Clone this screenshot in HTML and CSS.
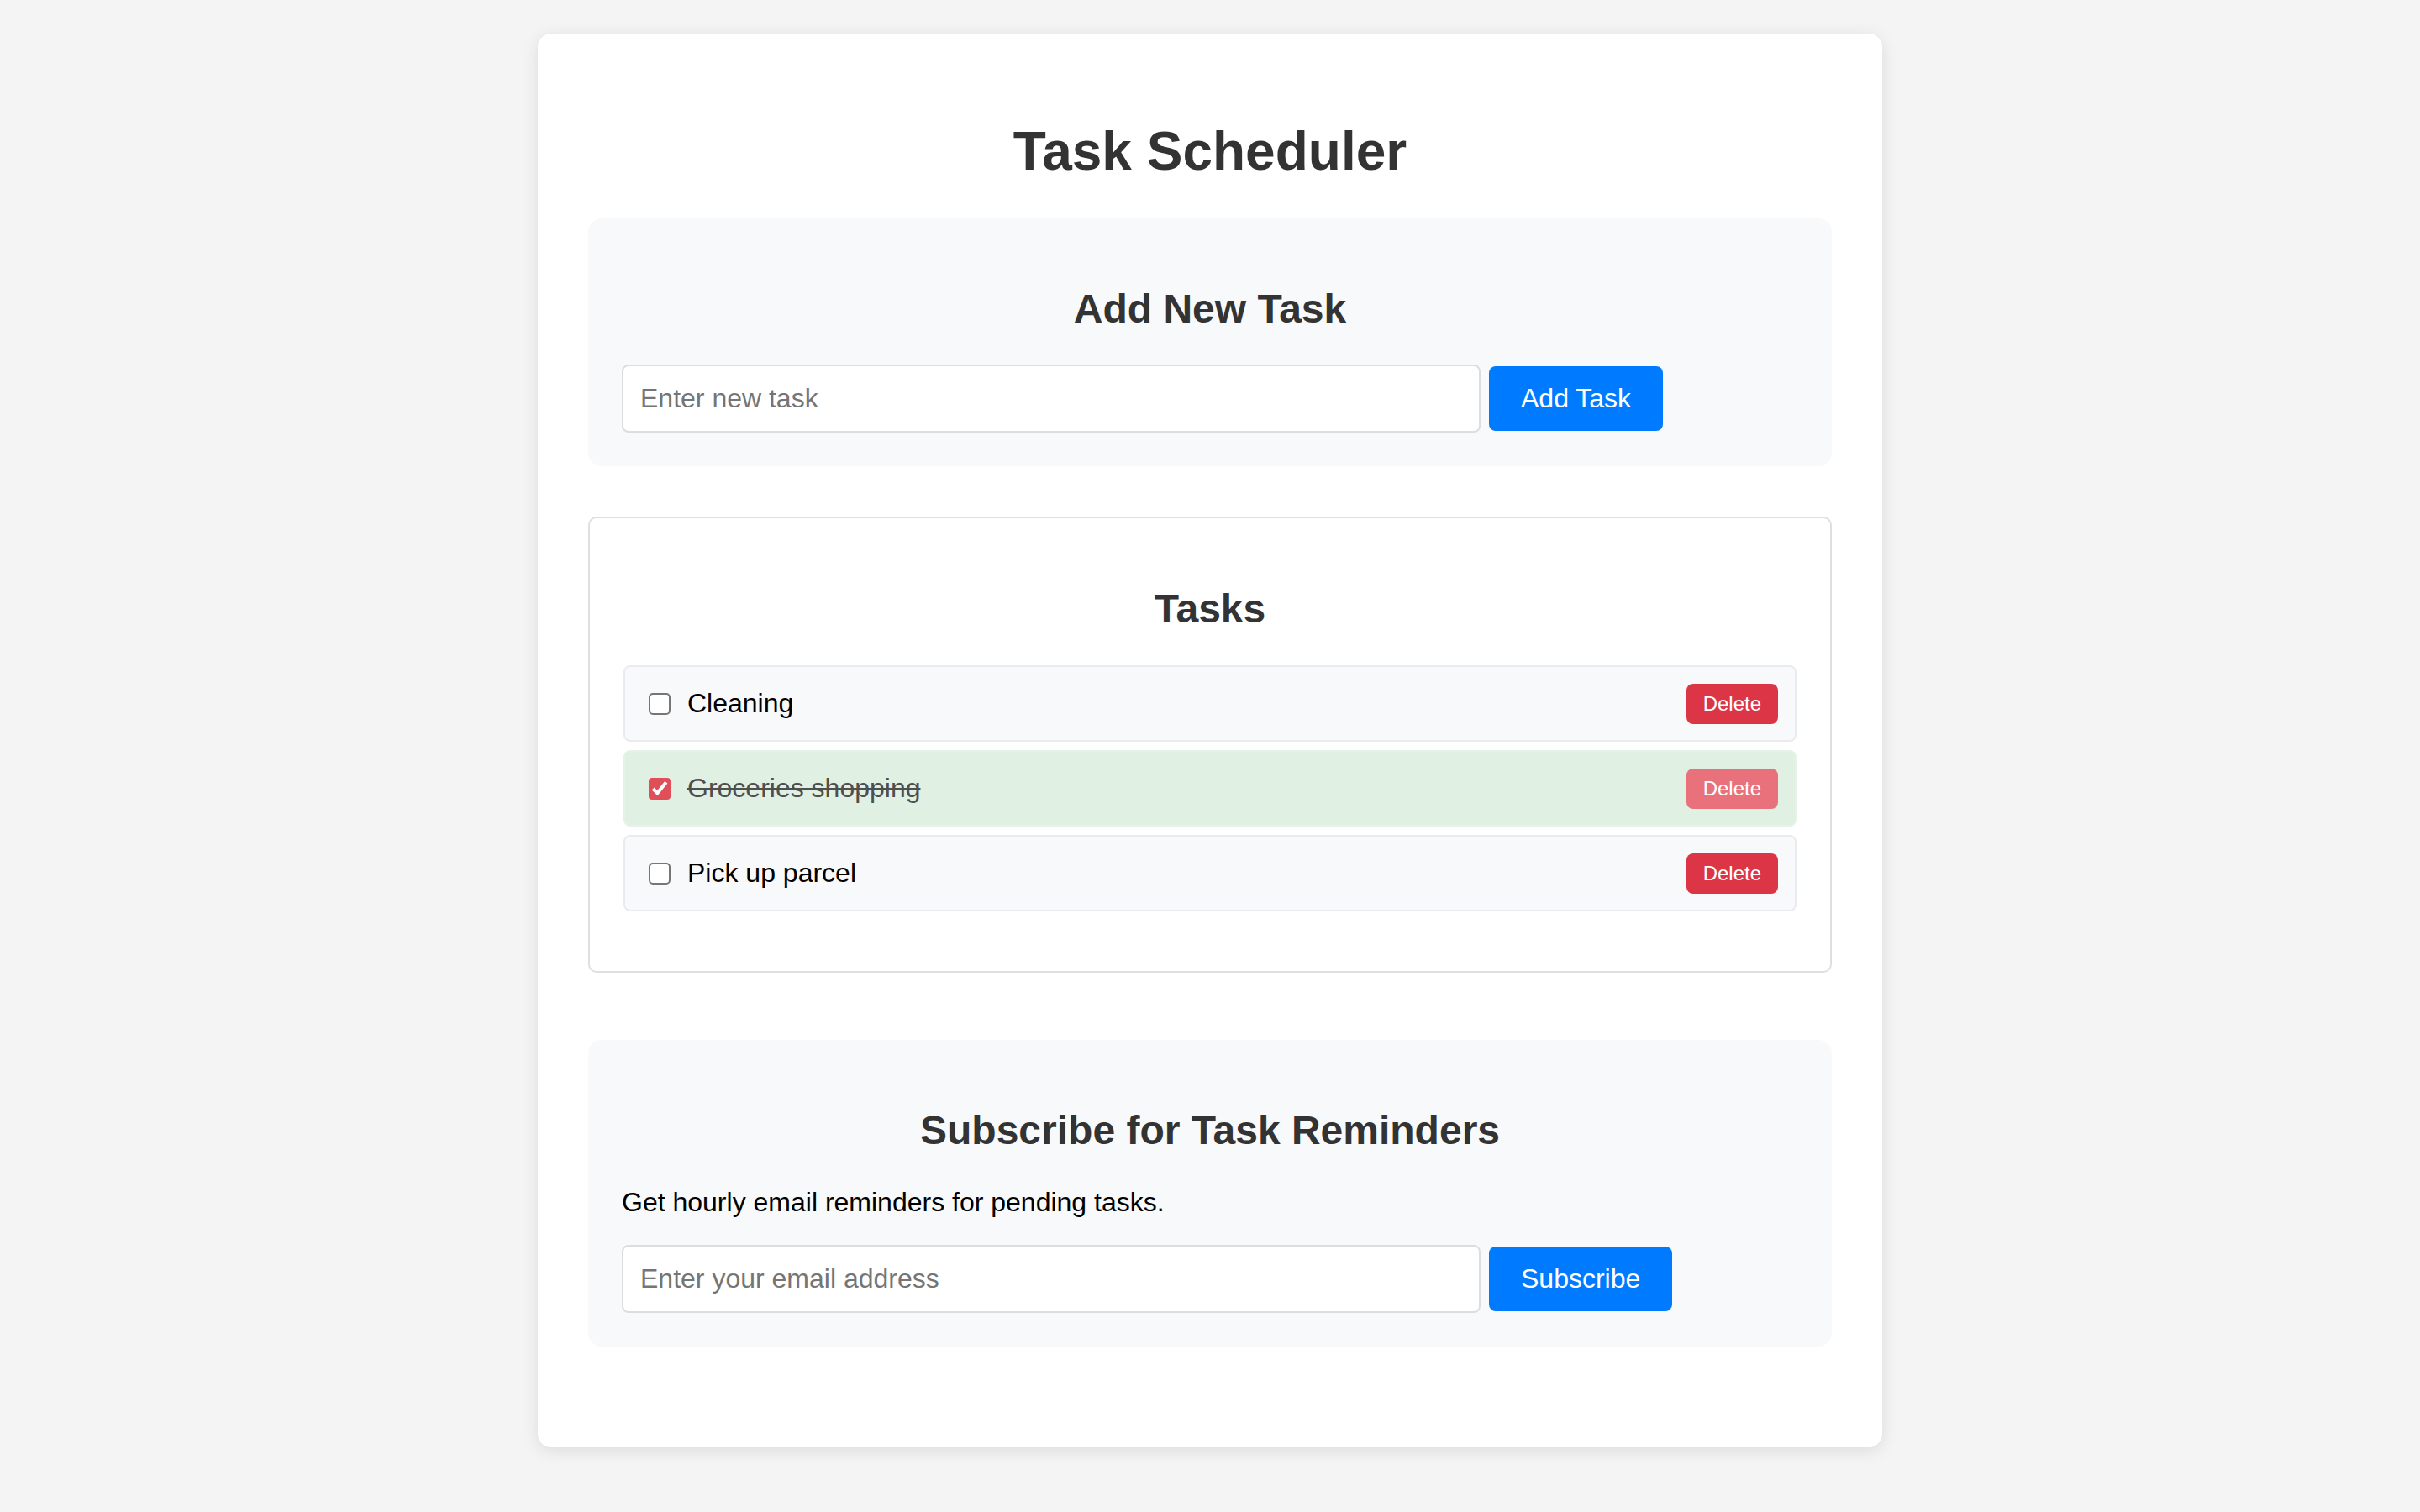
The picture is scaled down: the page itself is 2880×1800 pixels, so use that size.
FILE: index.html
```html
<!DOCTYPE html>
<html lang="en">
<head>
<meta charset="utf-8">
<title>Task Scheduler</title>
<link rel="stylesheet" href="styles.css">
</head>
<body>
<div class="container">
  <h1 class="page-title">Task Scheduler</h1>

  <section class="panel panel-soft">
    <h2 class="panel-title">Add New Task</h2>
    <div class="form-row">
      <input class="text-input" type="text" placeholder="Enter new task">
      <button class="btn-primary" type="button">Add Task</button>
    </div>
  </section>

  <section class="panel panel-bordered">
    <h2 class="panel-title">Tasks</h2>
    <ul class="task-list">
      <li class="task-item">
        <label class="task-label"><input class="task-check" type="checkbox"><span class="task-text">Cleaning</span></label>
        <button class="btn-delete" type="button">Delete</button>
      </li>
      <li class="task-item is-done">
        <label class="task-label"><input class="task-check" type="checkbox" checked><span class="task-text">Groceries shopping</span></label>
        <button class="btn-delete" type="button">Delete</button>
      </li>
      <li class="task-item">
        <label class="task-label"><input class="task-check" type="checkbox"><span class="task-text">Pick up parcel</span></label>
        <button class="btn-delete" type="button">Delete</button>
      </li>
    </ul>
  </section>

  <section class="panel panel-soft panel-subscribe">
    <h2 class="panel-title">Subscribe for Task Reminders</h2>
    <p class="panel-text">Get hourly email reminders for pending tasks.</p>
    <div class="form-row">
      <input class="text-input" type="email" placeholder="Enter your email address">
      <button class="btn-primary" type="button">Subscribe</button>
    </div>
  </section>
</div>
</body>
</html>
```

FILE: styles.css
```css
html, body {
  margin: 0;
}

body {
  padding: 40px;
  background: #f4f4f4;
  font-family: "Liberation Sans", Arial, sans-serif;
  color: #000;
}

.container {
  max-width: 1600px;
  margin: 0 auto;
  padding: 60px;
  box-sizing: border-box;
  background: #fff;
  border-radius: 16px;
  box-shadow: 0 4px 20px rgba(0, 0, 0, 0.1);
}

.page-title {
  margin: 42.88px 0;
  font-size: 64px;
  font-weight: bold;
  text-align: center;
  color: #333;
}

.panel {
  padding: 40px;
  border-radius: 16px;
  margin-bottom: 60px;
}

.panel-soft {
  background: #f8f9fa;
}

.panel-bordered {
  background: #fff;
  border: 2px solid #dfdfdf;
  border-radius: 10px;
  margin-bottom: 80px;
}

.panel-title {
  margin: 39.84px 0;
  font-size: 48px;
  font-weight: bold;
  text-align: center;
  color: #333;
}

.panel-text {
  margin: 32px 0;
  font-size: 32px;
}

.form-row {
  display: flex;
  align-items: center;
  gap: 10px;
}

.text-input {
  width: 978px;
  box-sizing: content-box;
  padding: 20px;
  border: 2px solid #dddddd;
  border-radius: 8px;
  background: #fff;
  font-family: "Liberation Sans", Arial, sans-serif;
  font-size: 32px;
  line-height: normal;
  color: #000;
  outline: none;
}

.text-input::placeholder {
  color: #757575;
}

.btn-primary {
  padding: 20px 38px;
  border: none;
  border-radius: 8px;
  background: #007bff;
  color: #fff;
  font-family: "Liberation Sans", Arial, sans-serif;
  font-size: 32px;
  line-height: normal;
  cursor: pointer;
}

.task-list {
  list-style: none;
  margin: 32px 0 31px;
  padding: 0;
}

.task-item {
  display: flex;
  align-items: center;
  justify-content: space-between;
  padding: 19.5px 20px;
  margin-bottom: 10px;
  background: #f8f9fa;
  border: 2px solid #e9ebee;
  border-radius: 8px;
}

.task-label {
  display: flex;
  align-items: center;
  font-size: 32px;
}

.task-check {
  zoom: 2;
  margin: 3px 10px 3px 4px;
  accent-color: #e04e5a;
}

.task-text {
  color: #000;
}

.btn-delete {
  padding: 10px 20px;
  border: none;
  border-radius: 8px;
  background: #dc3545;
  color: #fff;
  font-family: "Liberation Sans", Arial, sans-serif;
  font-size: 24px;
  line-height: normal;
  cursor: pointer;
}

.task-item.is-done {
  background: #e0f0e3;
  border-color: #e5f2e8;
}

.task-item.is-done .task-text {
  color: #4f4f4f;
  text-decoration: line-through;
}

.task-item.is-done .btn-delete {
  background: #e8717c;
}
```
